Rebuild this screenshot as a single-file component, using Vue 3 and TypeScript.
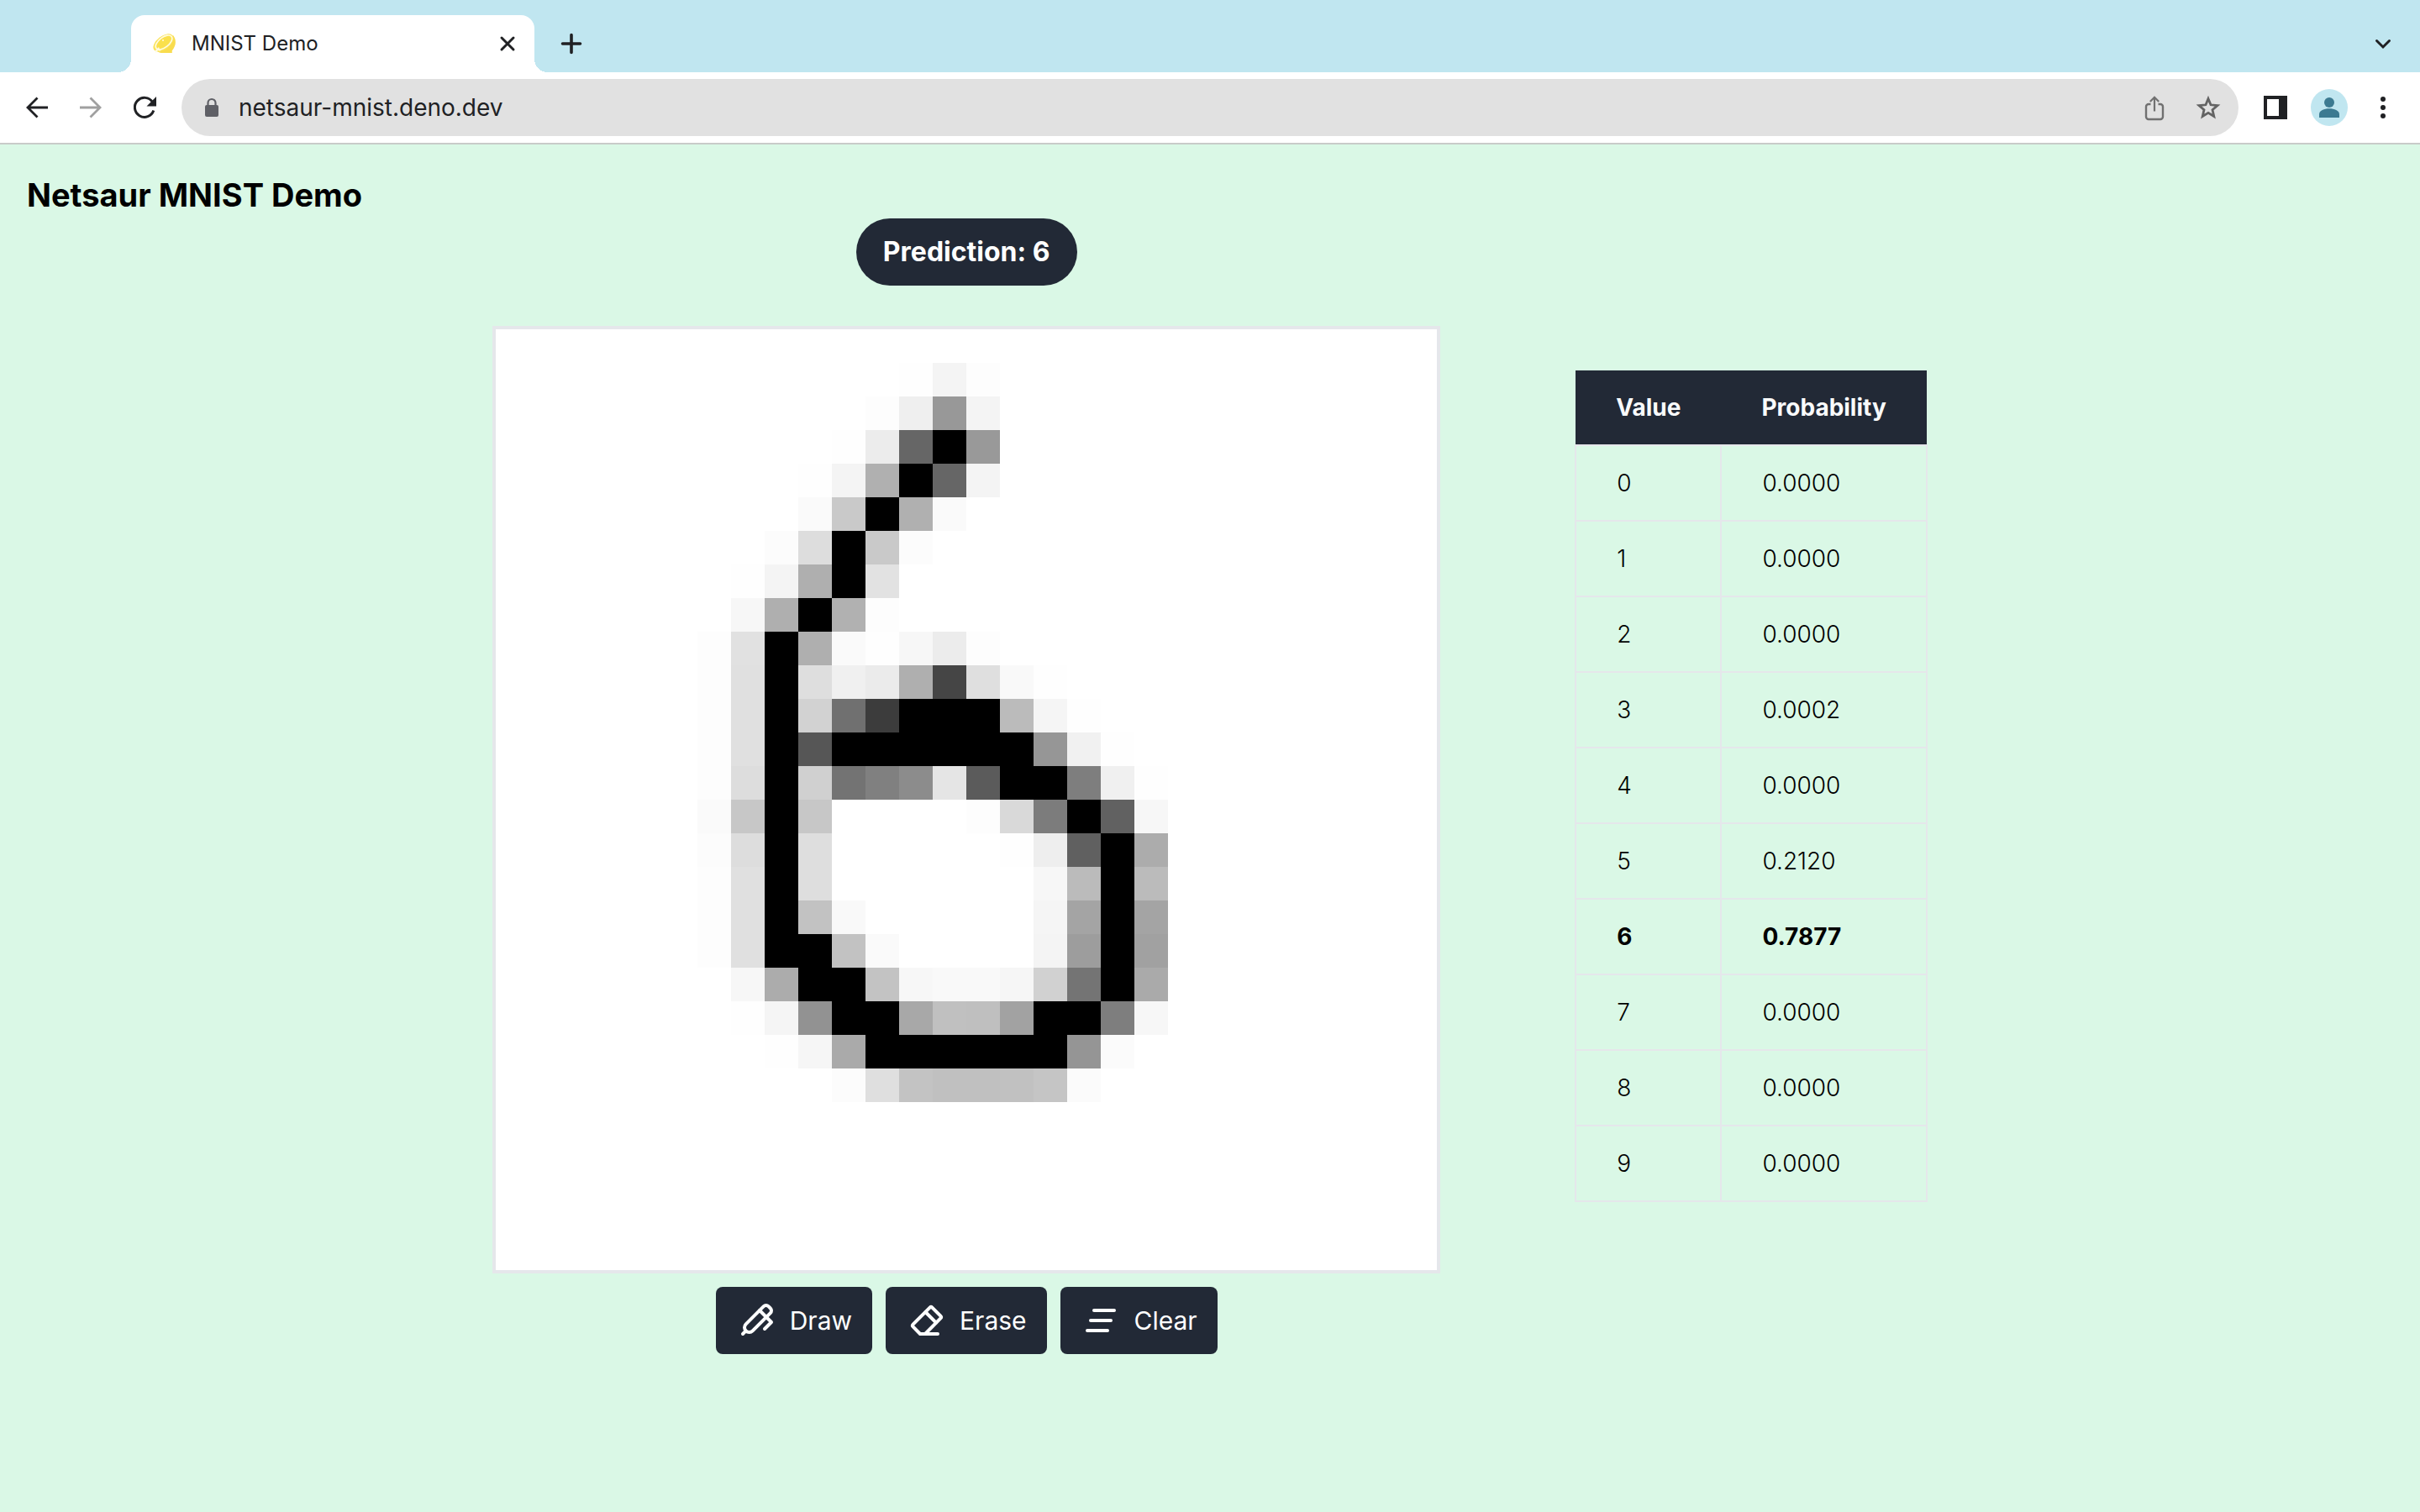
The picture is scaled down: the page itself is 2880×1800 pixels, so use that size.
<script setup lang="ts">
import { ref } from 'vue'

interface Cell {
  x: number
  y: number
  fill: string
}

// One entry per painted run: [row, first column, grey levels as hex pairs].
const strokes: [number, number, string][] = [
  [1, 12, 'fe f4 fd'],
  [2, 11, 'fd ef 98 f4'],
  [3, 10, 'fe ec 66 00 99'],
  [4, 9, 'fe f4 b0 00 66 f4'],
  [5, 9, 'fa c9 00 b0 fa'],
  [6, 8, 'fc dd 00 c9 fc'],
  [7, 7, 'fe f4 af 00 e2'],
  [8, 7, 'f7 af 00 b1 fd'],
  [9, 6, 'fd e1 00 af fa fe f7 ec fd'],
  [10, 6, 'fd e0 00 de f0 eb af 45 df f9 fe'],
  [11, 6, 'fd e0 00 d2 70 3c 00 00 00 bb f5 fe'],
  [12, 6, 'fd e0 00 56 00 00 00 00 00 00 96 f1 fe'],
  [13, 6, 'fd dd 00 d0 73 80 8c e5 5b 00 00 7e f0 fe'],
  [14, 6, 'fa c7 00 c7'],
  [14, 14, 'fd d9 7c 00 61 f7'],
  [15, 6, 'fc dd 00 de'],
  [15, 15, 'fe ee 60 00 ac'],
  [16, 6, 'fd e0 00 de'],
  [16, 16, 'f7 bb 00 bb'],
  [17, 6, 'fd e0 00 c2 f9'],
  [17, 16, 'f5 a4 00 a4'],
  [18, 6, 'fd e0 00 00 c2 fa'],
  [18, 16, 'f4 9d 00 a1'],
  [19, 7, 'f7 ac 00 00 c3 f7 f9 f9 f6 d1 74 00 aa'],
  [20, 7, 'fe f5 92 00 00 a8 c0 bf a2 00 00 7e f7'],
  [21, 8, 'fe f6 aa 00 00 00 00 00 00 95 fb'],
  [22, 10, 'fc df c3 c0 c0 c1 c5 fb'],
]

const cells: Cell[] = strokes.flatMap(([y, start, levels]) =>
  levels.split(' ').map((level, i) => ({ x: start + i, y, fill: `#${level}${level}${level}` })),
)

const address = ref('netsaur-mnist.deno.dev')
const probabilities = [0, 0, 0, 0.0002, 0, 0.212, 0.7877, 0, 0, 0]
const prediction = probabilities.indexOf(Math.max(...probabilities))

const tools = [
  {
    name: 'Draw',
    paths: [
      'M14 6l7 7l-4 4',
      'M5.828 18.172a2.828 2.828 0 0 0 4 0l10.586 -10.586a2 2 0 0 0 0 -2.829l-1.171 -1.171a2 2 0 0 0 -2.829 0l-10.586 10.586a2.828 2.828 0 0 0 0 4z',
      'M4 20l1.768 -1.768',
    ],
  },
  {
    name: 'Erase',
    paths: [
      'M19 20h-10.5l-4.21 -4.3a1 1 0 0 1 0 -1.41l10 -10a1 1 0 0 1 1.41 0l5 5a1 1 0 0 1 0 1.41l-9.2 9.3',
      'M18 13.3l-6.3 -6.3',
    ],
  },
  { name: 'Clear', paths: ['M8 6h12', 'M6 12h12', 'M4 18h12'] },
]
</script>

<template>
  <div class="window">
    <header class="tab-strip">
      <div class="tab">
        <svg class="favicon" viewBox="0 0 28 28" aria-hidden="true">
          <path d="M24 4 C28 9 28 16 23 22 C22 23 24 25 22 25 H10 C8 25 6 24 5 22 Z" fill="#f9dc4e" />
          <ellipse cx="12.500" cy="13" rx="14" ry="8" transform="rotate(-38 12.500 13)" fill="#fae35a" />
          <ellipse cx="13" cy="12.500" rx="11.500" ry="6" transform="rotate(-38 13 12.500)" fill="#fae04c" stroke="#fffbe0" stroke-width="1.600" />
          <path d="M3 22 L7 18 L9 23 L6 22 L3 25 Z" fill="#fffbe0" />
          <circle cx="12" cy="10" r="1" fill="#fffbe0" />
        </svg>
        <span class="tab-title">MNIST Demo</span>
        <button class="icon-button small" type="button" aria-label="Close tab">
          <svg width="32" height="32" viewBox="0 0 32 32"><path d="M9 9 L23 23 M23 9 L9 23" class="line dark" stroke-width="3" /></svg>
        </button>
      </div>
      <button class="icon-button new-tab" type="button" aria-label="New tab">
        <svg width="48" height="48" viewBox="0 0 48 48"><path d="M24 13.5 V34.5 M13.5 24 H34.5" class="line dark" stroke-width="3.6" /></svg>
      </button>
      <button class="icon-button tab-search" type="button" aria-label="Search tabs">
        <svg width="48" height="48" viewBox="0 0 48 48"><path d="M16.500 20.500 L24 28 L31.500 20.500" class="line dark" stroke-width="3" /></svg>
      </button>
    </header>

    <div class="toolbar">
      <nav class="nav-group" aria-label="Browser">
        <button class="icon-button" type="button" aria-label="Back">
          <svg width="48" height="48" viewBox="0 0 48 48"><path d="M37 24 H13 M24.500 12.500 L13 24 L24.500 35.500" class="line dark butt" stroke-width="2.800" /></svg>
        </button>
        <button class="icon-button" type="button" aria-label="Forward">
          <svg width="48" height="48" viewBox="0 0 48 48"><path d="M11 24 H35 M23.500 12.500 L35 24 L23.500 35.500" class="line faded butt" stroke-width="2.800" /></svg>
        </button>
        <button class="icon-button" type="button" aria-label="Reload">
          <svg width="48" height="48" viewBox="0 0 48 48">
            <path d="M33.500 17.500 A11.500 11.500 0 1 0 34.800 27.500" class="line dark butt" stroke-width="3" />
            <path d="M38 11 V22.500 H26.500 Z" fill="#202124" />
          </svg>
        </button>
      </nav>

      <div class="omnibox">
        <svg class="lock" width="32" height="32" viewBox="0 0 32 32" aria-hidden="true">
          <rect x="8" y="13" width="16" height="14" rx="2" fill="#5f6066" />
          <path d="M11.500 13 V10.500 a4.500 4.500 0 0 1 9 0 V13" fill="none" stroke="#5f6066" stroke-width="2.200" />
        </svg>
        <input v-model="address" class="address" type="text" aria-label="Address" spellcheck="false" />
        <button class="icon-button" type="button" aria-label="Share">
          <svg width="48" height="48" viewBox="0 0 48 48">
            <path d="M19.500 20 H17 a3 3 0 0 0 -3 3 V35 a3 3 0 0 0 3 3 H31 a3 3 0 0 0 3 -3 V23 a3 3 0 0 0 -3 -3 H28.500" class="line grey butt" stroke-width="2.400" />
            <path d="M24 28.500 V12.500 M18.800 17 L24 11.800 L29.200 17" class="line grey butt" stroke-width="2.200" />
          </svg>
        </button>
        <button class="icon-button" type="button" aria-label="Bookmark this page">
          <svg width="48" height="48" viewBox="0 0 48 48">
            <path d="M24 13.500 L27 20.800 L35 21.500 L29 26.700 L30.800 34.500 L24 30.400 L17.200 34.500 L19 26.700 L13 21.500 L21 20.800 Z" fill="none" stroke="#636363" stroke-width="2.800" />
          </svg>
        </button>
      </div>

      <div class="nav-group">
        <button class="icon-button" type="button" aria-label="Side panel">
          <svg width="48" height="48" viewBox="0 0 48 48"><path d="M10 10 H38 V38 H10 Z M14 14 V34 H28 V14 Z" fill="#202124" fill-rule="evenodd" /></svg>
        </button>
        <button class="icon-button" type="button" aria-label="Profile">
          <svg width="48" height="48" viewBox="0 0 48 48">
            <circle cx="24" cy="24" r="22" fill="#c0e6f0" />
            <circle cx="24" cy="18" r="6" fill="#3c7a91" />
            <path d="M12 36 V32 C12 23 36 23 36 32 V36 Z" fill="#3c7a91" />
          </svg>
        </button>
        <button class="icon-button" type="button" aria-label="Menu">
          <svg width="48" height="48" viewBox="0 0 48 48" fill="#202124">
            <circle cx="24" cy="14" r="3" /><circle cx="24" cy="24" r="3" /><circle cx="24" cy="34" r="3" />
          </svg>
        </button>
      </div>
    </div>

    <main class="page">
      <h1>Netsaur MNIST Demo</h1>
      <div class="workspace">
        <section class="board">
          <p class="prediction">Prediction: {{ prediction }}</p>
          <svg class="drawing" viewBox="0 0 28 28" shape-rendering="crispEdges" role="img" aria-label="Drawn digit">
            <rect v-for="cell in cells" :key="`${cell.x}-${cell.y}`" :x="cell.x" :y="cell.y" width="1" height="1" :fill="cell.fill" />
          </svg>
          <div class="tools">
            <button v-for="tool in tools" :key="tool.name" class="tool" type="button">
              <svg width="48" height="48" viewBox="0 0 24 24" aria-hidden="true">
                <path v-for="d in tool.paths" :key="d" :d="d" />
              </svg>
              {{ tool.name }}
            </button>
          </div>
        </section>

        <table class="results">
          <thead>
            <tr>
              <th scope="col">Value</th>
              <th scope="col">Probability</th>
            </tr>
          </thead>
          <tbody>
            <tr v-for="(probability, digit) in probabilities" :key="digit" :class="{ best: digit === prediction }">
              <td>{{ digit }}</td>
              <td>{{ probability.toFixed(4) }}</td>
            </tr>
          </tbody>
        </table>
      </div>
    </main>
  </div>
</template>

<style>
body {
  margin: 0;
  background: #daf8e6;
}
</style>

<style scoped>
.window {
  min-height: 100vh;
  display: flex;
  flex-direction: column;
  font-family: Inter, "Liberation Sans", sans-serif;
  color: #000;
}

button {
  border: 0;
  padding: 0;
  background: none;
  font: inherit;
  color: inherit;
}

.icon-button {
  flex: none;
  width: 48px;
  height: 48px;
}

.icon-button.small {
  width: 32px;
  height: 32px;
}

svg {
  display: block;
}

.line {
  fill: none;
  stroke-linecap: round;
}

.butt {
  stroke-linecap: butt;
}

.dark {
  stroke: #202124;
}

.faded {
  stroke: #a0a0a0;
}

.grey {
  stroke: #707070;
}

.tab-strip {
  display: flex;
  align-items: center;
  height: 68px;
  padding: 18px 20px 0 156px;
  background: #c0e6f0;
}

.tab {
  position: relative;
  box-sizing: border-box;
  display: flex;
  align-items: center;
  gap: 18px;
  width: 480px;
  height: 68px;
  padding: 0 16px 0 26px;
  border-radius: 16px 16px 0 0;
  background: #fff;
}

.tab::before,
.tab::after {
  content: "";
  position: absolute;
  bottom: 0;
  width: 16px;
  height: 16px;
}

.tab::before {
  right: 100%;
  background: radial-gradient(circle at 0 0, transparent 16px, #fff 16px);
}

.tab::after {
  left: 100%;
  background: radial-gradient(circle at 100% 0, transparent 16px, #fff 16px);
}

.favicon {
  width: 28px;
  height: 28px;
}

.tab-title {
  flex: 1;
  font-size: 24px;
  line-height: 32px;
  color: #202124;
}

.new-tab {
  margin-left: 20px;
}

.tab-search {
  margin-left: auto;
}

.toolbar {
  display: flex;
  align-items: center;
  gap: 20px;
  height: 84px;
  padding: 0 20px;
  border-bottom: 2px solid #c8cbc9;
  background: #fff;
}

.nav-group {
  display: flex;
  gap: 16px;
}

.omnibox {
  flex: 1;
  display: flex;
  align-items: center;
  gap: 16px;
  height: 68px;
  padding: 0 12px 0 20px;
  border-radius: 34px;
  background: #e1e1e1;
}

.lock {
  flex: none;
}

.address {
  flex: 1;
  min-width: 0;
  padding: 0;
  border: 0;
  outline: 0;
  background: none;
  font: inherit;
  font-size: 28px;
  line-height: 40px;
  color: #202124;
}

.page {
  flex: 1;
  padding: 32px;
  background: #daf8e6;
}

h1 {
  margin: 0;
  font-size: 38px;
  line-height: 56px;
  font-weight: 700;
}

.workspace {
  display: flex;
  justify-content: center;
  align-items: center;
  gap: 160px;
}

.board {
  display: flex;
  flex-direction: column;
  align-items: center;
}

.prediction {
  margin: 0 0 48px;
  padding: 16px 32px;
  border-radius: 40px;
  background: #222936;
  color: #fff;
  font-size: 32px;
  line-height: 48px;
  font-weight: 700;
}

.drawing {
  width: 1120px;
  height: 1120px;
  border: 4px solid #e5e7eb;
  background: #fff;
}

.tools {
  display: flex;
  gap: 16px;
  margin-top: 16px;
}

.tool {
  display: flex;
  align-items: center;
  gap: 16px;
  padding: 16px 24px;
  border-radius: 8px;
  background: #222936;
  color: #fff;
  font-size: 30px;
  line-height: 48px;
}

.tool svg {
  fill: none;
  stroke: currentColor;
  stroke-width: 2;
  stroke-linecap: round;
  stroke-linejoin: round;
}

.results {
  border-collapse: collapse;
  font-size: 28px;
  line-height: 40px;
  text-align: left;
}

.results th {
  padding: 24px 48px;
  background: #222936;
  color: #f9fafb;
  font-weight: 700;
}

.results td {
  padding: 24px 48px;
  border: 2px solid #e5e7eb;
  font-weight: 300;
}

.results .best td {
  font-weight: 700;
}
</style>
